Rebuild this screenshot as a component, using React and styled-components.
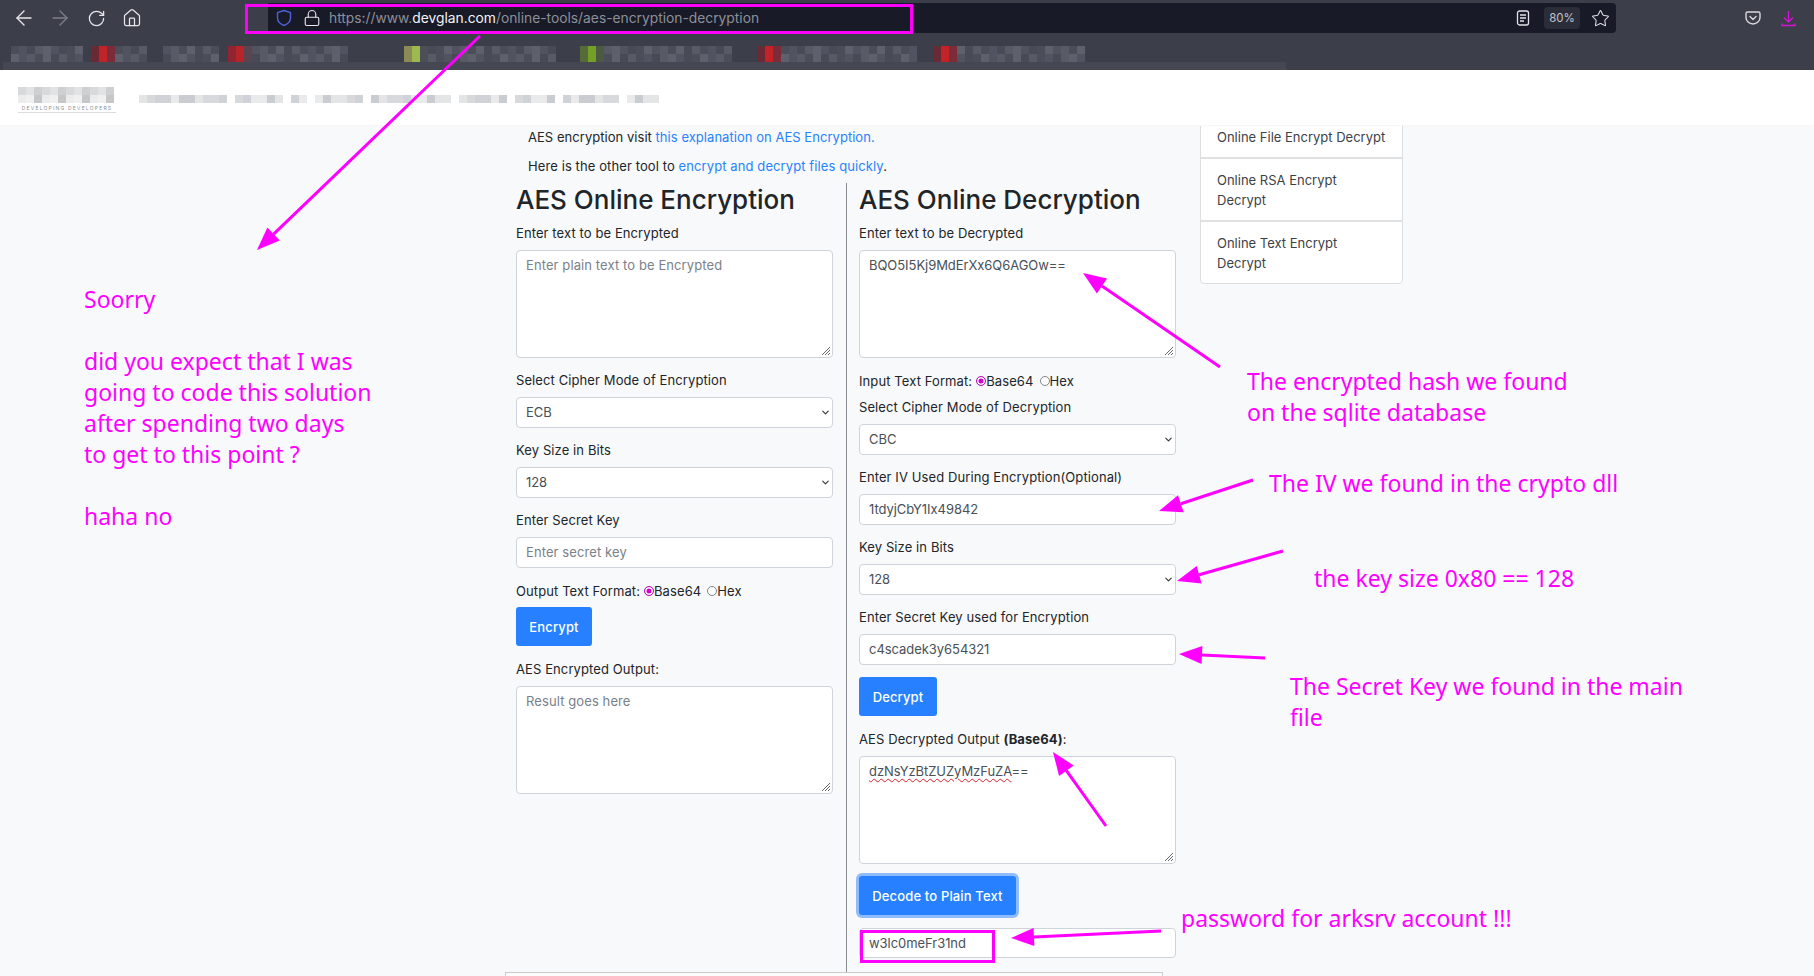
import React from 'react'
import styled, {createGlobalStyle} from 'styled-components'
import {ArrowLeft, ArrowRight, RotateCw, House, Lock, Star, ChevronDown} from 'lucide-react'

const MAGENTA = '#ff00ff'

const GlobalStyle = createGlobalStyle`
    html, body {
        margin: 0;
        width: 1814px;
        height: 976px;
        overflow: hidden;
        background: #f8f9fa;
        font-family: Inter, "Liberation Sans", sans-serif;
    }
    * {
        box-sizing: border-box;
    }
`

const Screen = styled.div`
    position: relative;
    width: 1814px;
    height: 976px;
    overflow: hidden;
`

/* browser chrome */

const BrowserBar = styled.header`
    position: relative;
    z-index: 2;
    height: 70px;
    background: #3c3e4a;
`

const Toolbar = styled.div`
    display: flex;
    align-items: flex-start;
    height: 46px;
    padding-left: 16px;
`

const NavIcon = styled.span`
    display: flex;
    align-items: center;
    justify-content: center;
    width: 16px;
    height: 36px;
    margin-right: ${p => p.$gap ?? 20}px;
    color: ${p => p.$color || '#e6e6ec'};

    svg {
        flex-shrink: 0;
    }
`

const UrlBar = styled.div`
    display: flex;
    align-items: center;
    width: 1348px;
    height: 30px;
    margin-top: 3px;
    margin-left: 128px;
    padding-left: 8px;
    padding-right: 6px;
    background: #181a27;
    border-radius: 0 4px 4px 0;
`

const ShieldSlot = styled.span`
    display: flex;
    margin-right: 11px;
`

const UrlText = styled.span`
    flex: 1;
    margin-left: 8px;
    padding-bottom: 1px;
    font-size: 13.8px;
    color: #8d8f98;
    white-space: nowrap;

    b {
        font-weight: 400;
        color: #f4f4f8;
    }
`

const ZoomPill = styled.span`
    display: flex;
    align-items: center;
    justify-content: center;
    width: 36px;
    height: 22px;
    margin: 0 11px 0 14px;
    border-radius: 4px;
    background: #2b2d39;
    color: #c4c5cc;
    font-size: 11.5px;
`

const ToolSlot = styled.span`
    display: flex;
    align-items: center;
    height: 36px;
    margin-left: ${p => p.$left}px;
`

const BookmarkRow = styled.div`
    display: flex;
    align-items: flex-start;
    height: 16px;
    padding-left: 11px;
`

const BookmarkBand = styled.div`
    width: 1283px;
    height: 8px;
    margin-left: 3px;
    background: #454753;
`

const CellStrip = styled.div`
    display: grid;
    grid-auto-flow: column;
    grid-template-rows: repeat(${p => p.$rows}, 8px);
    grid-auto-columns: 8px;
    margin-right: ${p => p.$gap}px;
`

const Cell = styled.i`
    display: block;
    background: ${p => p.$color};
`

/* site header */

const SiteNav = styled.nav`
    position: relative;
    z-index: 2;
    display: flex;
    height: 56px;
    background: #fff;
    padding-left: 18px;
    border-bottom: 1px solid #f6f6f7;
`

const Logo = styled.div`
    width: 121px;
    padding-top: 17px;
`

const LogoCaption = styled.div`
    width: 98px;
    margin-top: 1px;
    padding-top: 1px;
    padding-bottom: 1px;
    border-bottom: 1px solid #dcdcdc;
    text-align: center;
    font-size: 5px;
    line-height: 6px;
    letter-spacing: 1.2px;
    color: #8a8d92;
    white-space: nowrap;
`

const NavItems = styled.div`
    display: flex;
    padding-top: 25px;
`

/* page */

const Content = styled.main`
    display: flex;
    gap: 24px;
    padding-top: 1px;
    padding-left: 516px;
    font-size: 13px;
    letter-spacing: 0.1px;
    color: #212529;
`

const Center = styled.div`
    width: 660px;
`

const Intro = styled.p`
    margin: 0 0 ${p => p.$after}px 12px;
    line-height: 21px;
    height: 21px;
    white-space: nowrap;
    letter-spacing: ${p => p.$spacing}px;
`

const Link = styled.a`
    color: #2783ff;
`

const Columns = styled.div`
    display: flex;
`

const Column = styled.section`
    width: 330px;
    height: 789px;
    ${p => (p.$right ? 'padding-left: 12px; border-left: 1px solid #8a8c8f;' : 'padding-right: 13px;')}
`

const Heading = styled.h2`
    margin: 0 0 5px;
    height: 35px;
    font-size: 26px;
    font-weight: 500;
    line-height: 34px;
    letter-spacing: 0;
    color: #212529;
    white-space: nowrap;
`

const Group = styled.div`
    margin-bottom: 12px;
`

const Label = styled.label`
    display: block;
    height: 21px;
    margin-bottom: 6px;
    line-height: 21px;
    white-space: nowrap;
`

const BoxBase = styled.div`
    position: relative;
    width: 317px;
    background: #fff;
    border: 1px solid #ced4da;
    border-radius: 4px;
    padding: 0 9px;
    color: ${p => (p.$placeholder ? '#7a8188' : '#495057')};
    letter-spacing: ${p => (p.$placeholder ? '0.1px' : '-0.05px')};
    line-height: 21px;
`

const TextBox = styled(BoxBase)`
    height: 108px;
    padding-top: 4px;
`

const FieldBox = styled(BoxBase)`
    display: flex;
    align-items: center;
    justify-content: space-between;
    height: ${p => p.$height || 31}px;
    padding-right: 1px;
`

const Misspelt = styled.span`
    text-decoration: underline wavy #e0202a 1px;
    text-underline-offset: 2px;
`

const GripMark = styled.svg`
    position: absolute;
    right: 1px;
    bottom: 1px;
    width: 11px;
    height: 11px;
`

const RadioRow = styled.div`
    display: flex;
    align-items: center;
    height: 21px;
    margin-bottom: ${p => p.$after}px;
    white-space: nowrap;
`

const Radio = styled.span`
    width: 10px;
    height: 10px;
    margin: 0 0 0 ${p => p.$left || 4}px;
    border-radius: 50%;
    border: 1px solid ${p => (p.$on ? '#b020b0' : '#80848a')};
    background: ${p => (p.$on ? '#d000d0' : '#fff')};
    box-shadow: ${p => (p.$on ? 'inset 0 0 0 1.5px #fff' : 'none')};
`

const Button = styled.button`
    display: block;
    height: 39px;
    width: ${p => p.$width}px;
    margin-top: ${p => p.$top || 0}px;
    margin-bottom: 13px;
    padding: 0;
    border: 0;
    border-radius: 3px;
    background: #2680ff;
    color: #fff;
    font-family: inherit;
    font-size: 13px;
    font-weight: 500;
    letter-spacing: 0.15px;
    box-shadow: ${p => (p.$focus ? '0 0 0 3px rgba(38, 128, 255, 0.5)' : 'none')};
`

const BottomPanel = styled.div`
    width: 658px;
    height: 40px;
    margin-left: -11px;
    border: 1px solid #c9cbce;
    background: #fcfcfd;
`

const Sidebar = styled.aside`
    width: 203px;
    height: 169px;
    margin-top: -12px;
    background: #fff;
    border: 1px solid #dcdee0;
    border-radius: 4px;
    color: #3d4247;
    letter-spacing: 0;
`

const SideItem = styled.div`
    padding: 10.5px 16px;
    line-height: 20px;
    border-top: ${p => (p.$first ? 'none' : '2px solid #dfe0e2')};
`

/* annotations drawn over the screenshot */

const Markup = styled.svg`
    position: absolute;
    z-index: 3;
    top: 0;
    left: 0;
    width: 1814px;
    height: 976px;
    pointer-events: none;
`

const Note = styled.div`
    position: absolute;
    z-index: 3;
    left: ${p => p.$x}px;
    top: ${p => p.$y}px;
    font-family: "Noto Sans", sans-serif;
    font-size: 23px;
    line-height: 31px;
    color: ${MAGENTA};
    white-space: pre;
`

const bookmarkShades = ['#4b4d59', '#515360', '#585a66', '#5e606c', '#484a56']
const navShades = ['#e4e5e7', '#cfd2d6', '#c9cdd1', '#d7d9dc', '#e9eaeb']
const logoShades = ['#f0f0f1', '#e2e3e4', '#cfd0d1', '#d8d9da', '#c6c7c8', '#ececed']

const bookmarks = [
    {cells: 9, gap: 8},
    {cells: 7, gap: 16, accent: ['#6a2a35', '#c02428', '#7c2c38']},
    {cells: 7, gap: 9},
    {cells: 15, gap: 56, accent: ['#8e2530', '#b82429', '#5a4450']},
    {cells: 19, gap: 24, accent: ['#8c8a55', '#9cba50', '#4c4e58']},
    {cells: 19, gap: 25, accent: ['#566a3a', '#74a028', '#4c5a44']},
    {cells: 20, gap: 16, accent: ['#6a2a35', '#c02428', '#7c2c38']},
    {cells: 19, gap: 0, accent: ['#6a2a35', '#c02428', '#7c2c38']},
]

const navGroups = [
    {cells: 11, gap: 8},
    {cells: 6, gap: 8},
    {cells: 2, gap: 8},
    {cells: 6, gap: 8},
    {cells: 10, gap: 8},
    {cells: 6, gap: 8},
    {cells: 5, gap: 8},
    {cells: 7, gap: 8},
    {cells: 4, gap: 0},
]

const Strip = ({cells, gap, rows = 2, accent, shades, seed = 0}) => {
    const items = []
    for (let i = 0; i < cells * rows; i++) {
        const col = Math.floor(i / rows)
        const color = accent && col < accent.length
            ? accent[col]
            : shades[(i * 7 + seed * 3 + (i % 3)) % shades.length]
        items.push(<Cell key={i} $color={color}/>)
    }
    return <CellStrip $rows={rows} $gap={gap}>{items}</CellStrip>
}

const Grip = () => (
    <GripMark viewBox="0 0 11 11">
        <path d="M10 2 2 10M10 5 5 10M10 8 8 10" stroke="#666" strokeWidth="1" fill="none"/>
    </GripMark>
)

const Select = ({value}) => (
    <FieldBox>
        {value}
        <ChevronDown size={11} strokeWidth={2.4} color="#33373b"/>
    </FieldBox>
)

const ShieldIcon = () => (
    <svg width="16" height="18" viewBox="0 0 16 18" fill="none">
        <path d="M8 1.5 14.5 3.6V9c0 3.4-2.8 6-6.5 7.5C4.3 15 1.5 12.4 1.5 9V3.6Z" stroke="#4c63d8" strokeWidth="1.4" strokeLinejoin="round"/>
    </svg>
)

const ReaderIcon = () => (
    <svg width="14" height="16" viewBox="0 0 14 16" fill="none" stroke="#e2e2e8" strokeWidth="1.3">
        <rect x="1.5" y="1" width="11" height="14" rx="2"/>
        <path d="M4 5h6M4 8h6M4 11h4"/>
    </svg>
)

const PocketIcon = () => (
    <svg width="16" height="14" viewBox="0 0 16 14" fill="none" stroke="#d9d9df" strokeWidth="1.4">
        <path d="M2.5 1h11A1.5 1.5 0 0 1 15 2.5V6.5A7 6.5 0 0 1 1 6.5V2.5A1.5 1.5 0 0 1 2.5 1Z"/>
        <path d="M5 5.5 8 8.5 11 5.5" strokeLinecap="round" strokeLinejoin="round"/>
    </svg>
)

const DownloadIcon = () => (
    <svg width="15" height="17" viewBox="0 0 15 17" fill="none" stroke="#d414d4" strokeWidth="1.3">
        <path d="M7.5 1V11.5M3 7.5 7.5 12 12 7.5"/>
        <path d="M1 13.5V15.5H14V13.5"/>
    </svg>
)

const arrows = [
    [480, 36, 257, 250],
    [1220, 367, 1083, 273],
    [1253, 480, 1159, 511],
    [1283, 551, 1177, 581],
    [1265, 658, 1179, 654],
    [1106, 826, 1053, 752],
    [1161, 931, 1011, 938],
]

const Arrow = ({from, to}) => {
    const [x1, y1] = from
    const [x2, y2] = to
    const len = Math.hypot(x2 - x1, y2 - y1)
    const ux = (x2 - x1) / len
    const uy = (y2 - y1) / len
    const bx = x2 - ux * 23
    const by = y2 - uy * 23
    const head = [
        [x2, y2],
        [bx - uy * 9, by + ux * 9],
        [bx + uy * 9, by - ux * 9],
    ].map(pt => pt.join(',')).join(' ')
    return (
        <>
            <line x1={x1} y1={y1} x2={bx} y2={by} stroke={MAGENTA} strokeWidth="3"/>
            <polygon points={head} fill={MAGENTA}/>
        </>
    )
}

const App = () => (
    <Screen>
        <GlobalStyle/>

        <BrowserBar>
            <Toolbar>
                <NavIcon><ArrowLeft size={24} strokeWidth={1.4}/></NavIcon>
                <NavIcon $color="#7d7f88"><ArrowRight size={24} strokeWidth={1.4}/></NavIcon>
                <NavIcon><RotateCw size={19} strokeWidth={1.6}/></NavIcon>
                <NavIcon $gap={0}><House size={20} strokeWidth={1.5}/></NavIcon>
                <UrlBar>
                    <ShieldSlot><ShieldIcon/></ShieldSlot>
                    <Lock size={18} strokeWidth={1.5} color="#e6e6ec"/>
                    <UrlText>https://www.<b>devglan.com</b>/online-tools/aes-encryption-decryption</UrlText>
                    <ReaderIcon/>
                    <ZoomPill>80%</ZoomPill>
                    <Star size={19} strokeWidth={1.3} color="#e2e2e8"/>
                </UrlBar>
                <ToolSlot $left={129}><PocketIcon/></ToolSlot>
                <ToolSlot $left={20}><DownloadIcon/></ToolSlot>
            </Toolbar>
            <BookmarkRow>
                {bookmarks.map((b, i) => (
                    <Strip key={i} {...b} seed={i} shades={bookmarkShades}/>
                ))}
            </BookmarkRow>
            <BookmarkBand/>
        </BrowserBar>

        <SiteNav>
            <Logo>
                <Strip cells={12} gap={0} seed={1} shades={logoShades}/>
                <LogoCaption>DEVELOPING DEVELOPERS</LogoCaption>
            </Logo>
            <NavItems>
                {navGroups.map((g, i) => (
                    <Strip key={i} {...g} rows={1} seed={i} shades={navShades}/>
                ))}
            </NavItems>
        </SiteNav>

        <Content>
            <Center>
                <Intro $after={8} $spacing={0.04}>AES encryption visit <Link>this explanation on AES Encryption.</Link></Intro>
                <Intro $after={6} $spacing={0.1}>Here is the other tool to <Link>encrypt and decrypt files quickly</Link>.</Intro>
                <Columns>
                    <Column>
                        <Heading>AES Online Encryption</Heading>
                        <Group>
                            <Label>Enter text to be Encrypted</Label>
                            <TextBox $placeholder>Enter plain text to be Encrypted<Grip/></TextBox>
                        </Group>
                        <Group>
                            <Label>Select Cipher Mode of Encryption</Label>
                            <Select value="ECB"/>
                        </Group>
                        <Group>
                            <Label>Key Size in Bits</Label>
                            <Select value="128"/>
                        </Group>
                        <Group>
                            <Label>Enter Secret Key</Label>
                            <FieldBox $placeholder>Enter secret key</FieldBox>
                        </Group>
                        <RadioRow $after={6}>
                            Output Text Format:<Radio $on/>Base64<Radio $left={6}/>Hex
                        </RadioRow>
                        <Button $width={76}>Encrypt</Button>
                        <Group>
                            <Label>AES Encrypted Output:</Label>
                            <TextBox $placeholder>Result goes here<Grip/></TextBox>
                        </Group>
                    </Column>

                    <Column $right>
                        <Heading>AES Online Decryption</Heading>
                        <Group>
                            <Label>Enter text to be Decrypted</Label>
                            <TextBox>BQO5I5Kj9MdErXx6Q6AGOw==<Grip/></TextBox>
                        </Group>
                        <RadioRow $after={6}>
                            Input Text Format:<Radio $on/>Base64<Radio $left={6}/>Hex
                        </RadioRow>
                        <Group>
                            <Label>Select Cipher Mode of Decryption</Label>
                            <Select value="CBC"/>
                        </Group>
                        <Group>
                            <Label>Enter IV Used During Encryption(Optional)</Label>
                            <FieldBox>1tdyjCbY1Ix49842</FieldBox>
                        </Group>
                        <Group>
                            <Label>Key Size in Bits</Label>
                            <Select value="128"/>
                        </Group>
                        <Group>
                            <Label>Enter Secret Key used for Encryption</Label>
                            <FieldBox>c4scadek3y654321</FieldBox>
                        </Group>
                        <Button $width={78} $top={1}>Decrypt</Button>
                        <Group>
                            <Label>AES Decrypted Output <strong>(Base64)</strong>:</Label>
                            <TextBox><Misspelt>dzNsYzBtZUZyMzFuZA</Misspelt>==<Grip/></TextBox>
                        </Group>
                        <Button $width={157} $top={1} $focus>Decode to Plain Text</Button>
                        <FieldBox $height={30}>w3lc0meFr31nd</FieldBox>
                    </Column>
                </Columns>
                <BottomPanel/>
            </Center>

            <Sidebar>
                <SideItem $first>Online File Encrypt Decrypt</SideItem>
                <SideItem>Online RSA Encrypt Decrypt</SideItem>
                <SideItem>Online Text Encrypt Decrypt</SideItem>
            </Sidebar>
        </Content>

        <Markup viewBox="0 0 1814 976">
            <rect x="246.5" y="5.5" width="665" height="27" fill="none" stroke={MAGENTA} strokeWidth="3"/>
            <rect x="861.5" y="931.5" width="132" height="30" fill="none" stroke={MAGENTA} strokeWidth="3"/>
            {arrows.map(([x1, y1, x2, y2], i) => (
                <Arrow key={i} from={[x1, y1]} to={[x2, y2]}/>
            ))}
        </Markup>

        <Note $x={84} $y={284}>Soorry</Note>
        <Note $x={84} $y={346}>{'did you expect that I was\ngoing to code this solution\nafter spending two days\nto get to this point ?'}</Note>
        <Note $x={84} $y={501}>haha no</Note>
        <Note $x={1247} $y={366}>{'The encrypted hash we found\non the sqlite database'}</Note>
        <Note $x={1269} $y={468}>The IV we found in the crypto dll</Note>
        <Note $x={1314} $y={563}>the key size 0x80 == 128</Note>
        <Note $x={1290} $y={671}>{'The Secret Key we found in the main\nfile'}</Note>
        <Note $x={1181} $y={903}>password for arksrv account !!!</Note>
    </Screen>
)

export default App
